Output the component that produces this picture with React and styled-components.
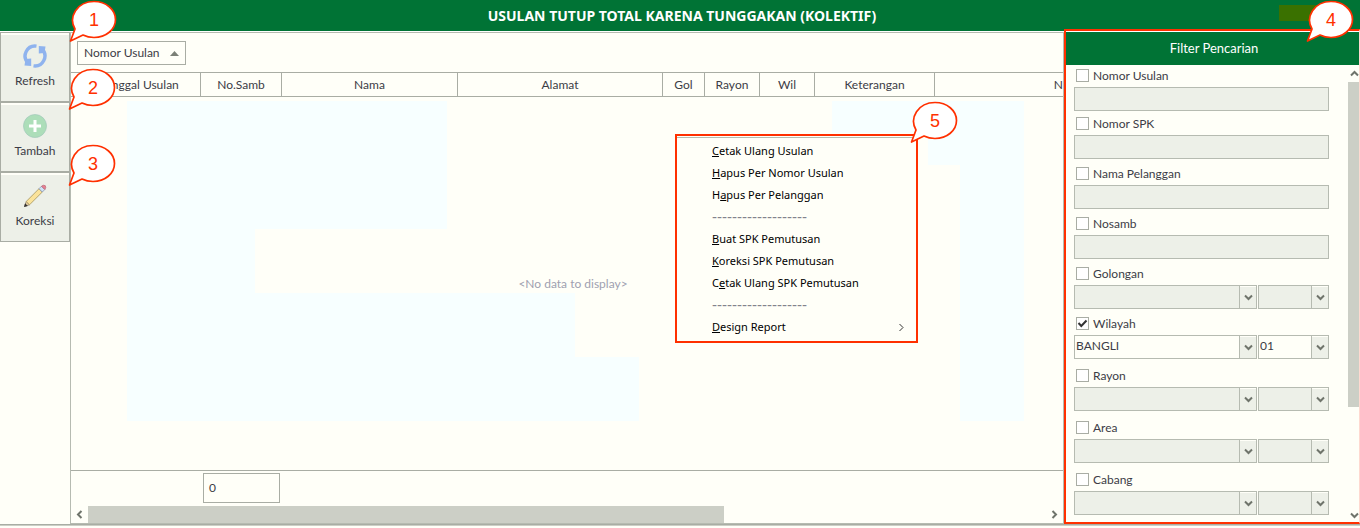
import React from "react";
import styled, { createGlobalStyle, css } from "styled-components";

const color = {
  green: "#007335",
  page: "#fffff8",
  line: "#a9ada4",
  soft: "#b6bbb1",
  control: "#edf0e8",
  thumb: "#cccfc6",
  text: "#3c3c46",
  red: "#ff3000",
  tint: "#f7ffff",
};

const GlobalStyle = createGlobalStyle`
  *, *::before, *::after { box-sizing: border-box; }
  body {
    margin: 0;
    background: ${color.page};
    color: ${color.text};
    font: 12px/14px Lato, "Noto Sans", sans-serif;
  }
  button, input, select { font: inherit; color: inherit; }
`;

const Page = styled.div`
  display: flex;
  flex-direction: column;
  min-height: 100vh;
`;

const TitleBar = styled.header`
  position: relative;
  display: flex;
  align-items: center;
  justify-content: center;
  height: 32px;
  padding-left: 4px;
  background: ${color.green};
  border-bottom: 1px solid #fff;
`;

const Title = styled.h1`
  margin: 0;
  color: #fff;
  font-family: "Noto Sans", "Open Sans", sans-serif;
  font-size: 14px;
  line-height: 20px;
  font-weight: 700;
`;

const UserMark = styled.span`
  position: absolute;
  top: 5px;
  right: 30px;
  width: 51px;
  height: 16px;
  background: #3a7100;
`;

const Main = styled.main`
  display: flex;
  flex: 1;
`;

const BottomEdge = styled.footer`
  height: 4px;
  border-top: 1px solid ${color.line};
  box-shadow: inset 0 1px ${color.thumb};
`;

const Sidebar = styled.nav`
  display: flex;
  flex-direction: column;
  flex: 0 0 71px;
  border-right: 1px solid ${color.soft};
`;

const ToolSlot = styled.div`
  position: relative;
`;

const ToolButton = styled.button`
  display: flex;
  flex-direction: column;
  align-items: center;
  gap: 6px;
  width: 100%;
  height: 70px;
  padding: 11px 0 0;
  border: 1px solid ${color.line};
  background: ${color.control};
  box-shadow: inset 0 2px ${color.page};
`;

const CalloutSvg = styled.svg`
  position: absolute;
  z-index: 3;
  top: ${(p) => p.$top}px;
  ${(p) => (p.$right !== undefined ? css`right: ${p.$right}px;` : css`left: ${p.$left}px;`)}
  pointer-events: none;
  text {
    fill: ${color.red};
    font: 18px "Liberation Sans", Arial, sans-serif;
    text-anchor: middle;
  }
`;

const GridSection = styled.section`
  position: relative;
  display: flex;
  flex-direction: column;
  flex: 1;
  min-width: 0;
  border: solid ${color.soft};
  border-width: 1px 1px 1px 0;
`;

const GroupArea = styled.div`
  padding: 8px 6px 7px;
`;

const GroupChip = styled.button`
  display: flex;
  align-items: center;
  justify-content: space-between;
  width: 109px;
  height: 24px;
  padding: 0 6px;
  border: 1px solid ${color.line};
  background: ${color.page};
`;

const TableArea = styled.div`
  display: grid;
  flex: 1;
  overflow: hidden;
`;

const patches = [
  [56, 4, 320, 128],
  [56, 132, 128, 64],
  [56, 196, 448, 64],
  [56, 260, 512, 64],
  [761, 4, 192, 32],
  [857, 36, 96, 32],
  [889, 68, 64, 256],
];

const Table = styled.table`
  width: 100%;
  height: 100%;
  table-layout: fixed;
  border-spacing: 0;
  th {
    height: 25px;
    padding: 0;
    border: solid ${color.line};
    border-width: 1px 1px 1px 0;
    font-weight: 400;
    white-space: nowrap;
  }
  th:first-child {
    padding-left: 8px;
  }
  th:last-child {
    border-right: 0;
    text-align: right;
  }
  td {
    padding: 0 0 0 12px;
    height: 373px;
    text-align: center;
    color: #a09fb0;
    background: ${patches
      .map(([x, y, w, h]) => `linear-gradient(${color.tint}, ${color.tint}) ${x}px ${y}px / ${w}px ${h}px no-repeat`)
      .join(", ")};
  }
`;

const SummaryBar = styled.div`
  height: 36px;
  padding: 2px 0 0 132px;
  border-top: 1px solid ${color.line};
`;

const SummaryBox = styled.output`
  display: flex;
  align-items: center;
  width: 77px;
  height: 30px;
  padding-left: 5px;
  border: 1px solid ${color.line};
`;

const HScroll = styled.div`
  display: flex;
  height: 17px;
`;

const HTrack = styled.div`
  flex: 1;
`;

const HThumb = styled.div`
  width: 66.4%;
  height: 100%;
  background: ${color.thumb};
`;

const ScrollButton = styled.button`
  display: flex;
  align-items: center;
  justify-content: center;
  flex: 0 0 17px;
  padding: 0;
  border: 0;
  background: none;
`;

const ContextMenu = styled.div`
  position: absolute;
  z-index: 2;
  top: 101px;
  left: 604px;
  width: 243px;
  padding: 4px 0 3px;
  border: 2px solid ${color.red};
  background: ${color.page};
  box-shadow: inset 0 1px ${color.page}, inset 0 2px ${color.soft};
`;

const MenuItem = styled.button`
  display: flex;
  align-items: center;
  justify-content: space-between;
  width: 100%;
  height: 22px;
  padding: 0 10px 0 35px;
  border: 0;
  background: none;
  color: #000;
  font-family: "Noto Sans", "Open Sans", sans-serif;
  font-size: 11px;
  text-align: left;
`;

const MenuDivider = styled.div`
  height: 22px;
  padding-left: 35px;
  font: 15px/22px "Liberation Sans", Arial, sans-serif;
  color: #83838c;
`;

const FilterPanel = styled.aside`
  position: relative;
  display: flex;
  flex-direction: column;
  flex: 0 0 296px;
`;

const RedFrame = styled.div`
  position: absolute;
  inset: -3px 0 0 0;
  border: 2px solid ${color.red};
  border-right: 1px solid #ffd9d0;
  pointer-events: none;
`;

const FilterTitle = styled.h2`
  margin: 0;
  padding-left: 4px;
  height: 33px;
  background: ${color.green};
  color: #fff;
  font-size: 13px;
  font-weight: 400;
  line-height: 33px;
  text-align: center;
`;

const FilterBody = styled.div`
  display: flex;
  flex: 1;
  justify-content: space-between;
`;

const Form = styled.form`
  width: 265px;
  padding: 4px 0 8px 10px;
`;

const Field = styled.div`
  margin-bottom: ${(p) => p.$gap}px;
`;

const CheckLabel = styled.label`
  display: flex;
  gap: 4px;
  height: 18px;
  padding-left: 2px;
`;

const Check = styled.input`
  appearance: none;
  width: 13px;
  height: 13px;
  margin: 0;
  border: 1px solid ${color.line};
  background: #fff;
  &:checked {
    background: #fff
      url("data:image/svg+xml,%3Csvg xmlns='http://www.w3.org/2000/svg' viewBox='0 0 11 11'%3E%3Cpath d='M1.5 5l2.8 3L9.5 2.5' fill='none' stroke='%23333' stroke-width='2'/%3E%3C/svg%3E");
  }
`;

const TextBox = styled.input`
  display: block;
  width: 100%;
  height: 24px;
  padding: 0 2px;
  border: 1px solid ${color.soft};
  background: ${color.control};
`;

const ComboRow = styled.div`
  display: grid;
  grid-template-columns: 183px 1fr;
  gap: 1px;
`;

const Combo = styled.div`
  display: grid;
  height: 24px;
  border: 1px solid ${color.soft};
  background: ${(p) => (p.$active ? color.page : color.control)};
  > * {
    grid-area: 1 / 1;
  }
`;

const Select = styled.select`
  appearance: none;
  min-width: 0;
  padding: 0 18px 2px 1px;
  border: 0;
  background: none;
  opacity: 1;
`;

const ComboArrow = styled.span`
  display: flex;
  align-items: center;
  justify-content: center;
  justify-self: end;
  width: 17px;
  border-left: 1px solid ${color.soft};
  background: ${color.control};
  box-shadow: inset 0 1px ${color.page};
  pointer-events: none;
`;

const VScroll = styled.div`
  display: flex;
  flex-direction: column;
  width: 12px;
`;

const VTrack = styled.div`
  flex: 1;
`;

const VThumb = styled.div`
  height: 76.5%;
  background: ${color.thumb};
`;

const rotation = { down: 0, left: 90, up: 180, right: 270 };

function Chevron({ dir = "down", stroke = "#6f746b", width = 2 }) {
  return (
    <svg width="9" height="9" viewBox="0 0 9 9" aria-hidden="true">
      <path
        d="M1 2.5l3.5 3.5L8 2.5"
        fill="none"
        stroke={stroke}
        strokeWidth={width}
        transform={`rotate(${rotation[dir]} 4.5 4.5)`}
      />
    </svg>
  );
}

function Callout({ n, ...pos }) {
  return (
    <CalloutSvg width="48" height="44" viewBox="0 0 48 44" {...pos}>
      <path
        d="M6 30C-1 18 8 2.500 25 2.500C37 2.500 46.500 10.500 46.500 20.500C46.500 30.500 37 38.500 25 38.500C20.500 38.500 17 37.500 14 36L1.500 42Z"
        fill="#fff"
        stroke={color.red}
        strokeWidth="1.700"
        strokeLinejoin="round"
      />
      <text x="25" y="27">{n}</text>
    </CalloutSvg>
  );
}

function RefreshIcon() {
  return (
    <svg width="24" height="24" viewBox="0 0 24 24" aria-hidden="true">
      <g fill="none" stroke="#8fb3ee" strokeWidth="3.400">
        <path d="M10.500 21.900A10 10 0 0 0 19 5" />
        <path d="M13.500 2.100A10 10 0 0 0 5 19" />
      </g>
      <path d="M15.800 2L22.500 2.500L21.500 9L15.800 9.500Z M8.200 22L1.500 21.500L2.500 15L8.200 14.500Z" fill="#8fb3ee" />
    </svg>
  );
}

function AddIcon() {
  return (
    <svg width="24" height="24" viewBox="0 0 24 24" aria-hidden="true">
      <circle cx="12" cy="12" r="11.500" fill="#addeb9" stroke="#a3c9bb" strokeWidth=".7" />
      <path d="M12 6v12M6 12h12" stroke="#fff" strokeWidth="3" />
    </svg>
  );
}

function PencilIcon() {
  return (
    <svg width="24" height="24" viewBox="0 0 24 24" aria-hidden="true">
      <path d="M1.500 22.500L3.200 17.500L6.500 20.800Z" fill="#e9cfa0" stroke="#8b8069" strokeWidth=".7" />
      <path d="M1 23l1.100-3.800 2.700 2.700z" fill="#333" />
      <path d="M3.200 17.500L16 4.700L19.300 8L6.500 20.800Z" fill="#fbe39a" stroke="#a4935a" strokeWidth=".8" />
      <path d="M16 4.700L18.500 2.200L21.800 5.500L19.300 8Z" fill="#cfe3f5" stroke="#8795b5" strokeWidth=".8" />
      <path d="M18.500 2.200Q20.300 .5 22.300 1.700Q23.500 3.700 21.800 5.500Z" fill="#e98192" stroke="#b96476" strokeWidth=".7" />
    </svg>
  );
}

const tools = [
  { label: "Refresh", Icon: RefreshIcon, left: 69, top: -33 },
  { label: "Tambah", Icon: AddIcon, left: 68, top: -35 },
  { label: "Koreksi", Icon: PencilIcon, left: 68, top: -29 },
];

const columns = [
  ["Tanggal Usulan", 130],
  ["No.Samb", 81],
  ["Nama", 176],
  ["Alamat", 205],
  ["Gol", 42],
  ["Rayon", 55],
  ["Wil", 55],
  ["Keterangan", 120],
  ["N", undefined],
];

// Each entry is [text before the access key, access key, rest]; null is a divider.
const menu = [
  ["", "C", "etak Ulang Usulan"],
  ["", "H", "apus Per Nomor Usulan"],
  ["H", "a", "pus Per Pelanggan"],
  null,
  ["", "B", "uat SPK Pemutusan"],
  ["", "K", "oreksi SPK Pemutusan"],
  ["C", "e", "tak Ulang SPK Pemutusan"],
  null,
  ["", "D", "esign Report"],
];

const filters = [
  { label: "Nomor Usulan", gap: 6 },
  { label: "Nomor SPK", gap: 8 },
  { label: "Nama Pelanggan", gap: 8 },
  { label: "Nosamb", gap: 8 },
  { label: "Golongan", gap: 8, combo: true },
  { label: "Wilayah", gap: 10, combo: true, name: "BANGLI", code: "01" },
  { label: "Rayon", gap: 10, combo: true },
  { label: "Area", gap: 10, combo: true },
  { label: "Cabang", gap: 0, combo: true },
];

function ComboBox({ label, value }) {
  return (
    <Combo $active={Boolean(value)}>
      <Select aria-label={label} defaultValue={value || ""}>
        <option>{value || ""}</option>
      </Select>
      <ComboArrow>
        <Chevron />
      </ComboArrow>
    </Combo>
  );
}

function Filter({ label, gap, combo, name, code }) {
  return (
    <Field $gap={gap}>
      <CheckLabel>
        <Check type="checkbox" defaultChecked={Boolean(name)} />
        {label}
      </CheckLabel>
      {combo ? (
        <ComboRow>
          <ComboBox label={label} value={name} />
          <ComboBox label={`Kode ${label}`} value={code} />
        </ComboRow>
      ) : (
        <TextBox type="text" aria-label={label} />
      )}
    </Field>
  );
}

export default function App() {
  return (
    <Page>
      <GlobalStyle />
      <TitleBar>
        <Title>USULAN TUTUP TOTAL KARENA TUNGGAKAN (KOLEKTIF)</Title>
        <UserMark />
      </TitleBar>
      <Main>
        <Sidebar>
          {tools.map(({ label, Icon, left, top }, i) => (
            <ToolSlot key={label}>
              <ToolButton type="button">
                <Icon />
                {label}
              </ToolButton>
              <Callout n={i + 1} $left={left} $top={top} />
            </ToolSlot>
          ))}
        </Sidebar>

        <GridSection>
          <GroupArea>
            <GroupChip type="button">
              Nomor Usulan
              <svg width="9" height="5" viewBox="0 0 9 5" aria-hidden="true">
                <path d="M0 5L4.500 0L9 5Z" fill="#7b8077" />
              </svg>
            </GroupChip>
          </GroupArea>
          <TableArea>
            <Table>
              <colgroup>
                {columns.map(([label, width]) => (
                  <col key={label} width={width} />
                ))}
              </colgroup>
              <thead>
                <tr>
                  {columns.map(([label]) => (
                    <th key={label} scope="col">{label}</th>
                  ))}
                </tr>
              </thead>
              <tbody>
                <tr>
                  <td colSpan={columns.length}>&lt;No data to display&gt;</td>
                </tr>
              </tbody>
            </Table>
          </TableArea>
          <SummaryBar>
            <SummaryBox>0</SummaryBox>
          </SummaryBar>
          <HScroll>
            <ScrollButton type="button" aria-label="Geser ke kiri">
              <Chevron dir="left" />
            </ScrollButton>
            <HTrack>
              <HThumb />
            </HTrack>
            <ScrollButton type="button" aria-label="Geser ke kanan">
              <Chevron dir="right" />
            </ScrollButton>
          </HScroll>

          <ContextMenu role="menu">
            {menu.map((item, i) =>
              item ? (
                <MenuItem key={i} type="button" role="menuitem">
                  <span>
                    {item[0]}
                    <u>{item[1]}</u>
                    {item[2]}
                  </span>
                  {i === menu.length - 1 && <Chevron dir="right" stroke="#333" width={1} />}
                </MenuItem>
              ) : (
                <MenuDivider key={i}>-------------------</MenuDivider>
              )
            )}
            <Callout n={5} $left={233} $top={-36} />
          </ContextMenu>
        </GridSection>

        <FilterPanel>
          <FilterTitle>Filter Pencarian</FilterTitle>
          <FilterBody>
            <Form>
              {filters.map((f) => (
                <Filter key={f.label} {...f} />
              ))}
            </Form>
            <VScroll>
              <ScrollButton type="button" aria-label="Gulir ke atas">
                <Chevron dir="up" />
              </ScrollButton>
              <VTrack>
                <VThumb />
              </VTrack>
              <ScrollButton type="button" aria-label="Gulir ke bawah">
                <Chevron />
              </ScrollButton>
            </VScroll>
          </FilterBody>
          <RedFrame />
          <Callout n={4} $right={6} $top={-33} />
        </FilterPanel>
      </Main>
      <BottomEdge />
    </Page>
  );
}
